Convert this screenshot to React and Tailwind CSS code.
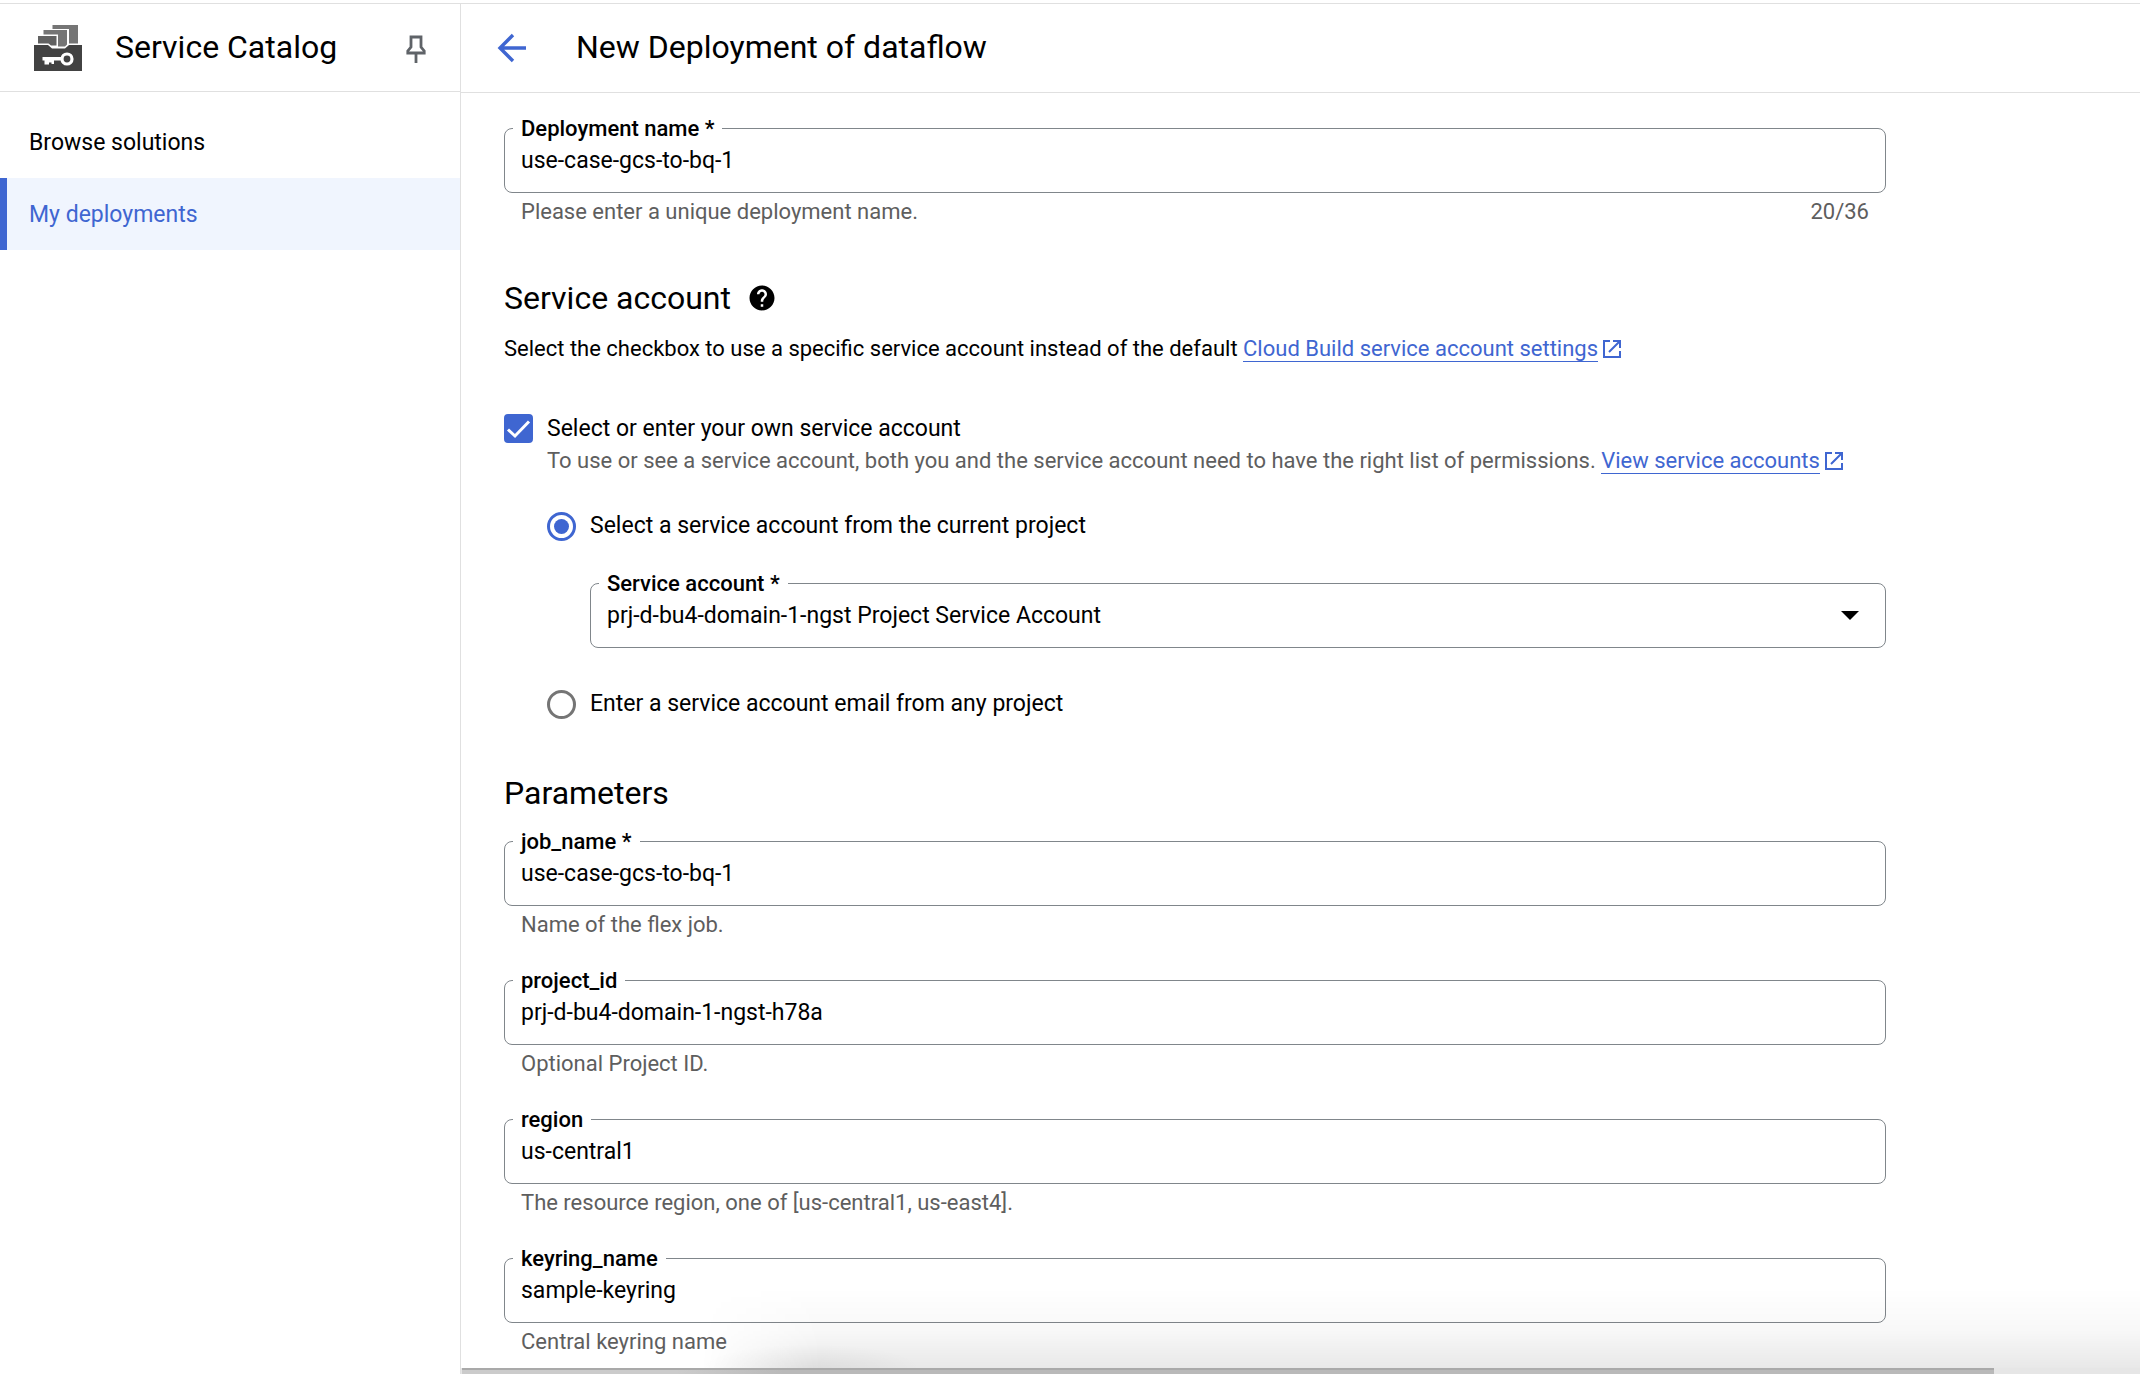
import { useId, useState } from "react";

function CatalogLogo() {
  return (
    <svg viewBox="0 0 48 46" className="h-[46px] w-12 shrink-0" aria-hidden="true">
      <path d="M18.500 0H44V18.500H35V4H18.500Z" fill="#757575" />
      <path d="M9.500 5H33V19.500L31 21.500H24V9.500H9.500Z" fill="#757575" />
      <path d="M4 11H22.500V20.500H17L14.500 18.500H4Z" fill="#616161" />
      <path d="M0 20H14L18 23.500H31L35 20H48V46H0Z" fill="#424242" />
      <circle cx="33" cy="34" r="5" fill="none" stroke="#fff" strokeWidth="3.200" />
      <path d="M8.500 32H28V35.500H20V39H17.500V37.500H15V39.500H10.500V35.500H8.500Z" fill="#fff" />
    </svg>
  );
}

function PinIcon() {
  return (
    <svg viewBox="0 0 20 28" className="h-7 w-5" fill="none" stroke="#5f6368" strokeWidth="2.800" aria-hidden="true">
      <path d="M5 2H15V12L18.200 16V18H1.800V16L5 12Z" />
      <path d="M10 18V28" />
    </svg>
  );
}

function ExternalIcon() {
  return (
    <svg viewBox="0 0 20 20" className="ml-1 inline-block size-5 align-[-3px]" fill="none" stroke="#3f66d1" strokeWidth="2" aria-hidden="true">
      <path d="M8 2H2V18H18V12" />
      <path d="M11 2H18V9M18 2L7 13" />
    </svg>
  );
}

function ExternalLink({ children }) {
  return (
    <a href="#" className="whitespace-nowrap text-[#3f66d1]">
      <span className="border-b border-[#3f66d1]">{children}</span>
      <ExternalIcon />
    </a>
  );
}

function Outline({ label, id, children }) {
  return (
    <div className="relative h-[65px] rounded-lg border border-[#80868b]">
      <label htmlFor={id} className="absolute -top-3 left-2 bg-white px-2 text-[22px] leading-6 font-medium">
        {label}
      </label>
      {children}
    </div>
  );
}

function TextField({ label, value, helper, max }) {
  const id = useId();
  const [text, setText] = useState(value);
  return (
    <div>
      <Outline label={label} id={id}>
        <input
          id={id}
          value={text}
          onChange={(e) => setText(e.target.value)}
          className="h-full w-full bg-transparent px-4 text-[23px] leading-8 outline-none"
        />
      </Outline>
      <div className="flex justify-between px-[17px] pt-[3px] text-[22px] leading-8 text-[#5e5e5e]">
        <span>{helper}</span>
        {max && <span>{max}</span>}
      </div>
    </div>
  );
}

function RadioOption({ label, checked, onChange }) {
  return (
    <label className="flex items-center gap-[14px] text-[23px] leading-8">
      <input
        type="radio"
        name="account-source"
        checked={checked}
        onChange={onChange}
        className="size-[29px] appearance-none rounded-full border-3 border-[#757575] bg-clip-content p-1 checked:border-[#3f66d1] checked:bg-[#3f66d1]"
      />
      {label}
    </label>
  );
}

const parameters = [
  { label: "job_name *", value: "use-case-gcs-to-bq-1", helper: "Name of the flex job." },
  { label: "project_id", value: "prj-d-bu4-domain-1-ngst-h78a", helper: "Optional Project ID." },
  { label: "region", value: "us-central1", helper: "The resource region, one of [us-central1, us-east4]." },
  { label: "keyring_name", value: "sample-keyring", helper: "Central keyring name" },
];

export default function App() {
  const accountId = useId();
  const [own, setOwn] = useState(true);
  const [source, setSource] = useState("current");
  return (
    <div className="flex h-screen flex-col bg-white pt-[3px] font-[Roboto,sans-serif] text-black">
      <div className="flex min-h-0 flex-1 border-t border-[#e0e0e0]">
        <aside className="w-[461px] shrink-0 border-r border-[#e0e0e0]">
          <header className="flex h-22 items-center border-b border-[#e0e0e0] pr-[34px] pl-[34px]">
            <CatalogLogo />
            <h2 className="ml-[33px] flex-1 pb-0.5 text-[32px] leading-10">Service Catalog</h2>
            <button type="button" aria-label="Pin menu" className="mt-0.5">
              <PinIcon />
            </button>
          </header>
          <nav className="flex flex-col pt-[14px] text-[23px] leading-8">
            <a href="#" className="flex h-18 items-center pt-0.5 pl-[29px]">
              Browse solutions
            </a>
            <a href="#" className="flex h-18 items-center border-l-7 border-[#3f66d1] bg-[#f0f5fe] pt-0.5 pl-[22px] text-[#3f66d1]">
              My deployments
            </a>
          </nav>
        </aside>

        <div className="relative flex min-w-0 flex-1 flex-col">
          <header className="flex h-[89px] shrink-0 items-center border-b border-[#e0e0e0] pr-8 pl-[35px]">
            <button type="button" aria-label="Back">
              <svg viewBox="0 0 32 32" className="size-8" fill="none" stroke="#3f66d1" strokeWidth="3.400" aria-hidden="true">
                <path d="M30 16H5M17 3L4 16L17 29" />
              </svg>
            </button>
            <h1 className="ml-12 pb-0.5 text-[32px] leading-10">New Deployment of dataflow</h1>
          </header>

          <main className="min-h-0 flex-1 overflow-hidden pt-[35px] pr-[254px] pl-[43px]">
            <TextField label="Deployment name *" value="use-case-gcs-to-bq-1" helper="Please enter a unique deployment name." max="20/36" />

            <section>
              <div className="mt-[50px] flex items-center gap-4">
                <h2 className="text-[32px] leading-10">Service account</h2>
                <svg viewBox="0 0 24 24" className="size-[30px]" aria-hidden="true">
                  <path d="M12 2C6.480 2 2 6.480 2 12s4.480 10 10 10 10-4.480 10-10S17.520 2 12 2zm1 17h-2v-2h2v2zm2.070-7.750l-.9.920C13.450 12.900 13 13.500 13 15h-2v-.5c0-1.100.45-2.100 1.170-2.830l1.240-1.260c.37-.36.59-.86.59-1.410 0-1.100-.9-2-2-2s-2 .9-2 2H8c0-2.210 1.790-4 4-4s4 1.790 4 4c0 .88-.36 1.680-.93 2.250z" />
                </svg>
              </div>
              <p className="mt-[15px] text-[22px] leading-8">
                Select the checkbox to use a specific service account instead of the default{" "}
                <ExternalLink>Cloud Build service account settings</ExternalLink>
              </p>

              <div className="mt-12 grid grid-cols-[29px_1fr] gap-x-[14px]">
                <div className="relative mt-px size-[29px]">
                  <input
                    id="own-account"
                    type="checkbox"
                    checked={own}
                    onChange={() => setOwn(!own)}
                    className="peer block size-full appearance-none rounded-sm border-3 border-[#757575] checked:border-[#3f66d1] checked:bg-[#3f66d1]"
                  />
                  <svg viewBox="0 0 29 29" className="pointer-events-none absolute inset-0 hidden peer-checked:block" fill="none" stroke="#fff" strokeWidth="3" aria-hidden="true">
                    <path d="M4 15.500L11 22L25 7.500" />
                  </svg>
                </div>
                <div>
                  <label htmlFor="own-account" className="block text-[23px] leading-8">
                    Select or enter your own service account
                  </label>
                  <p className="text-[22px] leading-8 text-[#5e5e5e]">
                    To use or see a service account, both you and the service account need to have the right list of permissions.{" "}
                    <ExternalLink>View service accounts</ExternalLink>
                  </p>
                  <div className="mt-[33px]">
                    <RadioOption label="Select a service account from the current project" checked={source === "current"} onChange={() => setSource("current")} />
                  </div>
                  <div className="mt-[41px] ml-[43px]">
                    <Outline label="Service account *" id={accountId}>
                      <select id={accountId} className="h-full w-full appearance-none bg-transparent px-4 text-[23px] leading-8 outline-none">
                        <option>prj-d-bu4-domain-1-ngst Project Service Account</option>
                      </select>
                      <svg viewBox="0 0 18 9" className="pointer-events-none absolute top-[27px] right-[26px] h-[9px] w-[18px]" aria-hidden="true">
                        <path d="M0 0H18L9 9Z" />
                      </svg>
                    </Outline>
                  </div>
                  <div className="mt-10">
                    <RadioOption label="Enter a service account email from any project" checked={source === "any"} onChange={() => setSource("any")} />
                  </div>
                </div>
              </div>
            </section>

            <section>
              <h2 className="mt-[53px] text-[32px] leading-10">Parameters</h2>
              <div className="mt-7 flex flex-col gap-[39px]">
                {parameters.map((p) => (
                  <TextField key={p.label} {...p} />
                ))}
              </div>
            </section>
          </main>

          <div className="pointer-events-none absolute right-0 bottom-[6px] left-60 h-20 bg-linear-to-t from-black/9 via-black/3 via-45% to-transparent mask-[linear-gradient(to_right,transparent,black_120px)]" />
          <div className="pointer-events-none absolute bottom-[6px] left-60 h-10 w-60 bg-[radial-gradient(ellipse_110px_24px_at_110px_100%,rgb(0_0_0/0.05),transparent)]" />
          <div className="h-[6px] shrink-0 bg-[#e6e6e6]">
            <div className="mr-[146px] ml-px h-full border-t-2 border-[#a9a9a9] bg-linear-to-r from-[#cbcbcb] from-14% to-[#b9b9b9] to-21%" />
          </div>
        </div>
      </div>
    </div>
  );
}
